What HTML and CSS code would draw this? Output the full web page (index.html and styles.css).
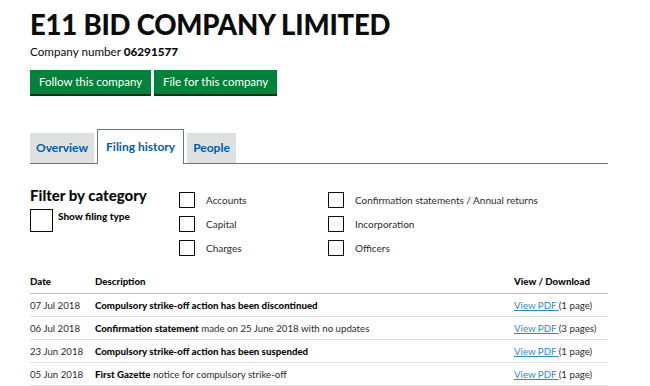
FILE: index.html
```html
<!DOCTYPE html>
<html>
<head>
<meta charset="utf-8">
<link rel="stylesheet" href="styles.css">
</head>
<body>
<div class="page">
  <h1 class="title">E11 BID COMPANY LIMITED</h1>
  <p class="number">Company number <strong>06291577</strong></p>
  <div class="actions">
    <a class="btn" href="#">Follow this company</a>
    <a class="btn" href="#">File for this company</a>
  </div>
  <ul class="tabs">
    <li class="tab"><a href="#">Overview</a></li>
    <li class="tab active"><a href="#">Filing history</a></li>
    <li class="tab"><a href="#">People</a></li>
  </ul>
  <div class="filter">
    <div class="filter-left">
      <h2 class="filter-title">Filter by category</h2>
      <label class="show-type"><span class="box big"></span><span>Show filing type</span></label>
    </div>
    <div class="cats">
      <label class="cat"><span class="box"></span>Accounts</label>
      <label class="cat"><span class="box"></span>Confirmation statements / Annual returns</label>
      <label class="cat"><span class="box"></span>Capital</label>
      <label class="cat"><span class="box"></span>Incorporation</label>
      <label class="cat"><span class="box"></span>Charges</label>
      <label class="cat"><span class="box"></span>Officers</label>
    </div>
  </div>
  <table class="history">
    <thead>
      <tr><th class="c-date">Date</th><th class="c-desc">Description</th><th class="c-view">View / Download</th></tr>
    </thead>
    <tbody>
      <tr><td>07 Jul 2018</td><td><strong>Compulsory strike-off action has been discontinued</strong></td><td><a href="#">View PDF </a>(1 page)</td></tr>
      <tr><td>06 Jul 2018</td><td><strong>Confirmation statement</strong> made on 25 June 2018 with no updates</td><td><a href="#">View PDF </a>(3 pages)</td></tr>
      <tr><td>23 Jun 2018</td><td><strong>Compulsory strike-off action has been suspended</strong></td><td><a href="#">View PDF </a>(1 page)</td></tr>
      <tr><td>05 Jun 2018</td><td><strong>First Gazette</strong> notice for compulsory strike-off</td><td><a href="#">View PDF </a>(1 page)</td></tr>
    </tbody>
  </table>
</div>
</body>
</html>
```
FILE: styles.css
```css
* { box-sizing: border-box; }
body {
  margin: 0;
  background: #fff;
  font-family: Lato, "Noto Sans", sans-serif;
  color: #0b0c0c;
}
.page {
  width: 608px;
  padding-left: 30px;
}
.title {
  margin: 0;
  padding-top: 7px;
  font-size: 27.5px;
  line-height: 36px;
  font-weight: 900;
  letter-spacing: -0.2px;
}
.number {
  margin: 0;
  font-size: 11.7px;
  line-height: 17px;
}
.number strong { font-weight: 900; }
.actions {
  display: flex;
  gap: 3px;
  margin-top: 10px;
}
.btn {
  display: block;
  background: #00823b;
  color: #fff;
  text-decoration: none;
  font-size: 11.5px;
  line-height: 24px;
  height: 24px;
  padding: 0 9px;
  box-shadow: 0 2px 0 #003618;
}
.tabs {
  list-style: none;
  margin: 36px 0 0;
  padding: 0;
  display: flex;
  align-items: flex-end;
  gap: 3px;
  border-bottom: 1px solid #6f777b;
  height: 34px;
}
.tab a {
  display: block;
  background: #dee0e2;
  color: #005ea5;
  font-weight: 700;
  font-size: 12px;
  text-decoration: none;
  height: 30px;
  line-height: 30px;
  padding: 0 6px;
}
.tab.active a {
  background: #fff;
  border: 1px solid #6f777b;
  border-bottom: none;
  height: 35px;
  line-height: 34px;
  margin-bottom: -1px;
  padding: 0 8px;
  padding-bottom: 1px;
}
.filter {
  display: flex;
  margin-top: 21px;
}
.filter-left { width: 149px; }
.filter-title {
  margin: 0;
  font-size: 15px;
  line-height: 20px;
  font-weight: 900;
}
.show-type {
  display: flex;
  gap: 5px;
  margin-top: 4px;
  font-size: 10px;
  font-weight: 900;
  line-height: 14px;
}
.box {
  display: inline-block;
  width: 16px;
  height: 16px;
  border: 1px solid #0b0c0c;
  flex: none;
}
.box.big {
  width: 23px;
  height: 23px;
  border-width: 1.5px;
}
.cats {
  display: grid;
  grid-template-columns: 149px auto;
  row-gap: 8px;
  margin-top: 7px;
}
.cat {
  display: flex;
  align-items: center;
  gap: 11px;
  font-size: 10px;
  color: #2c2c2c;
}
.history {
  width: 578px;
  border-collapse: collapse;
  margin-top: 14px;
  font-size: 9.7px;
  color: #2c2c2c;
}
.history th {
  text-align: left;
  font-weight: 900;
  color: #0b0c0c;
  height: 23px;
  padding: 0;
  border-bottom: 1px solid #bfc1c3;
  vertical-align: middle;
}
.history td {
  height: 23px;
  padding: 0;
  border-bottom: 1px solid #dee0e2;
}
.history strong { font-weight: 900; color: #0b0c0c; }
.c-date { width: 65px; }
.c-view { width: 94px; }
.history a { color: #2b8cc4; }
```
